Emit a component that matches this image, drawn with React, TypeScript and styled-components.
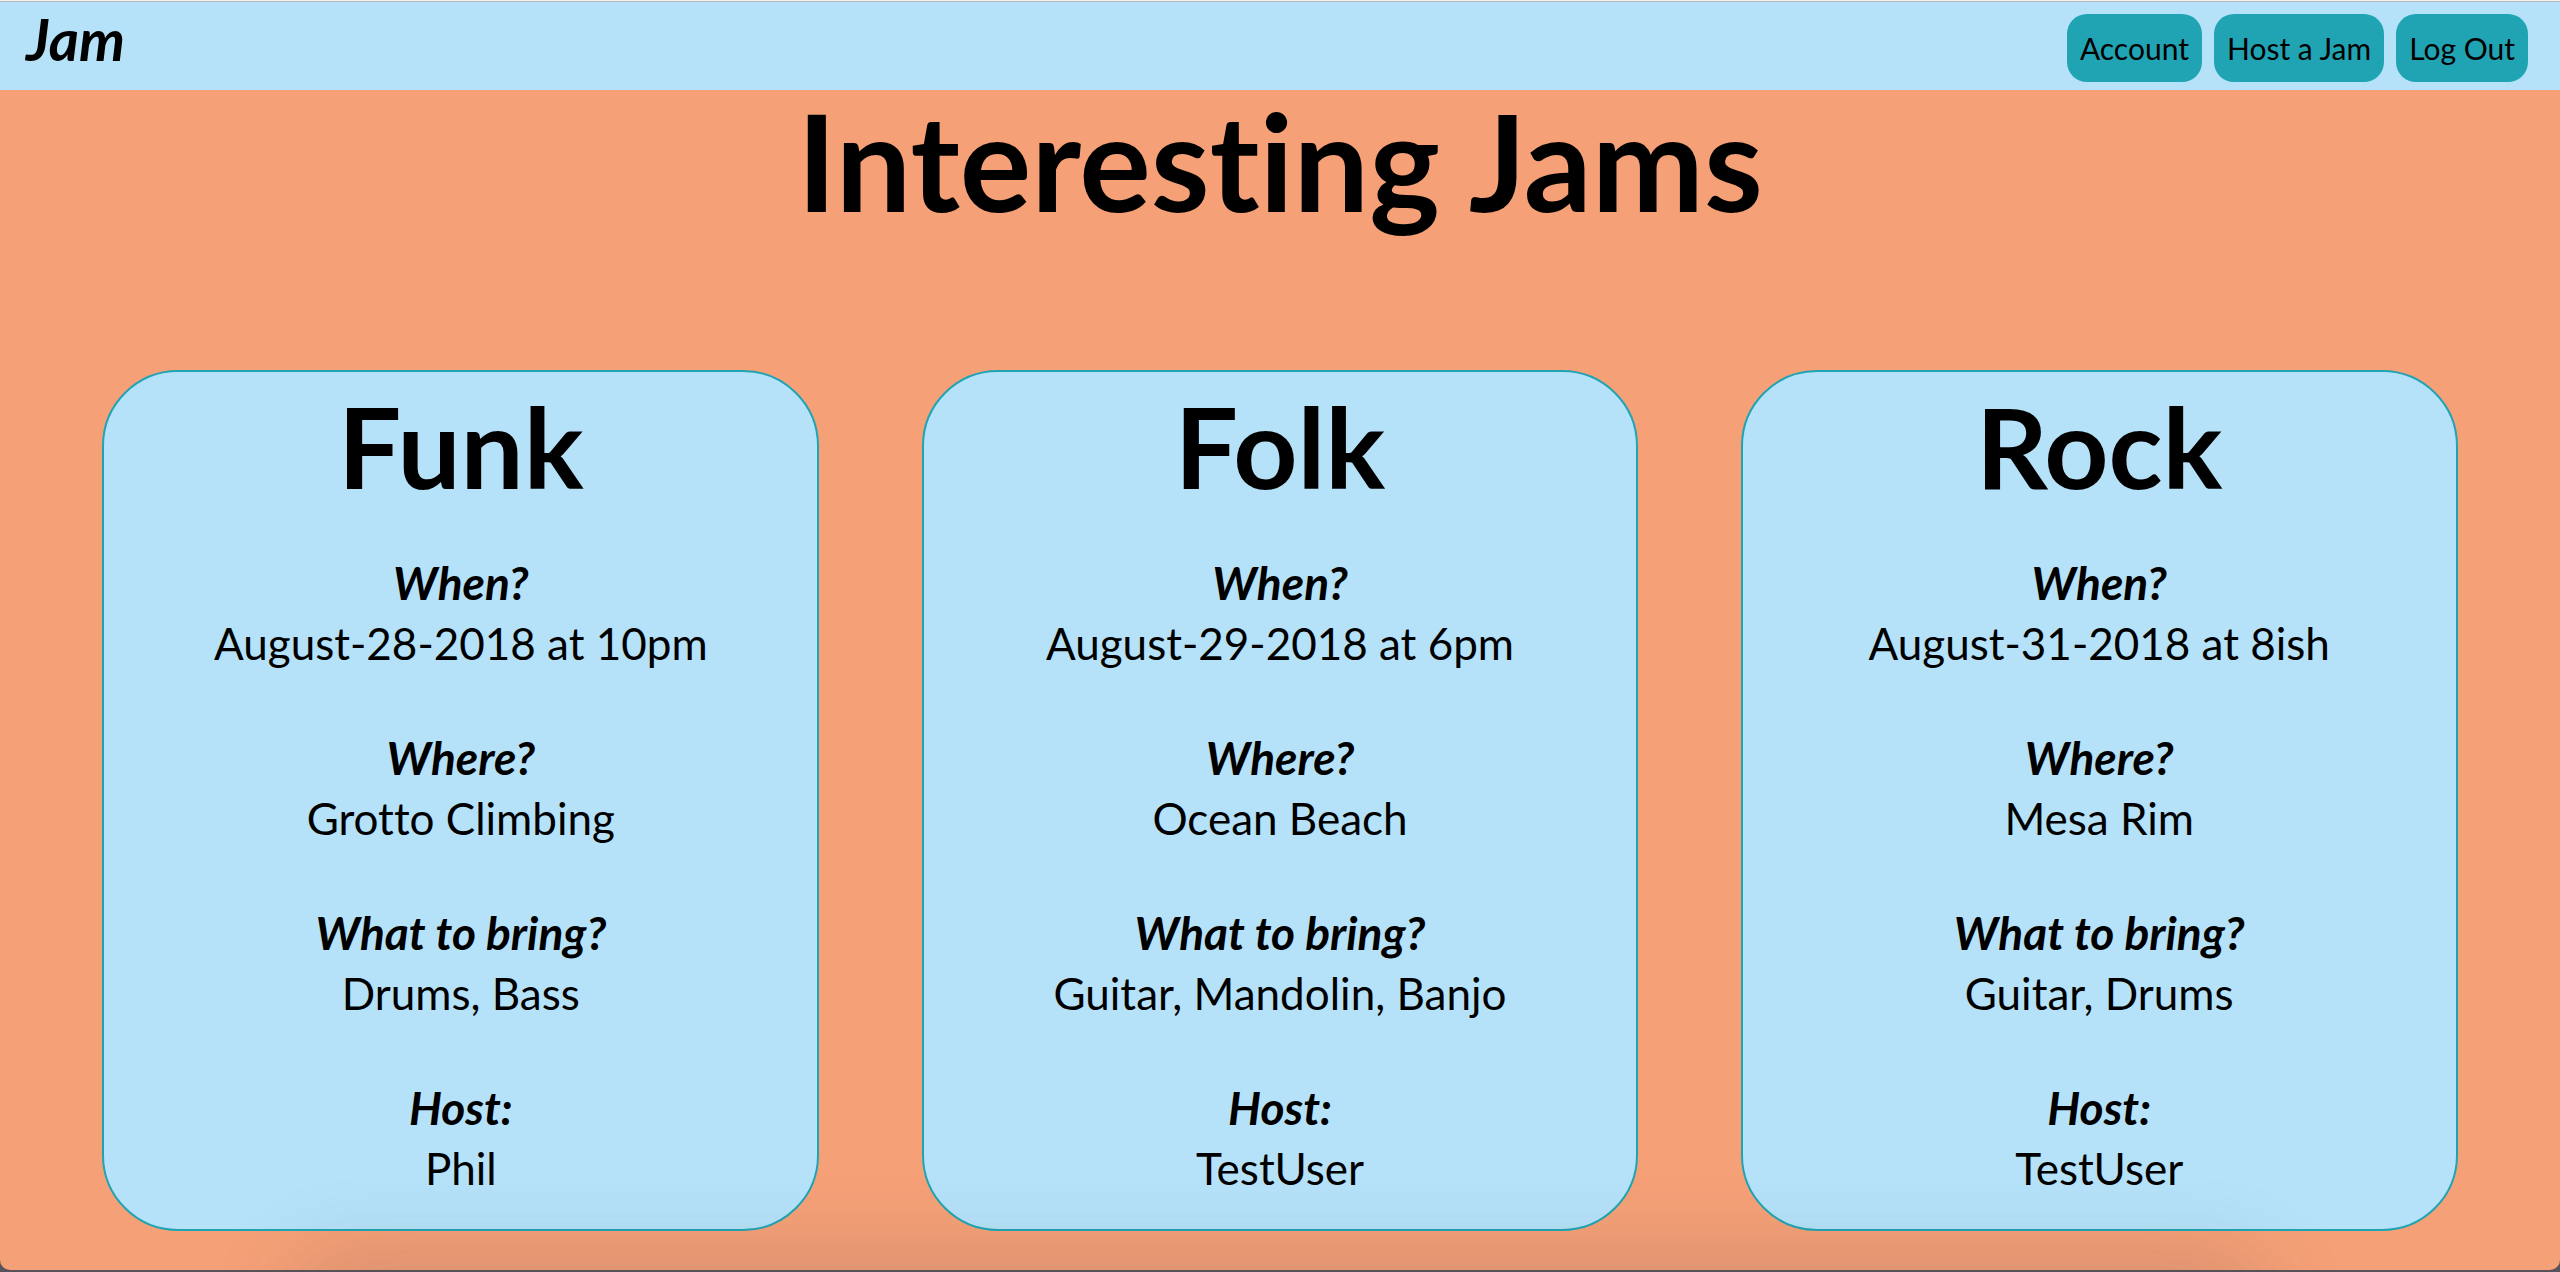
import React from "react";
import styled, { createGlobalStyle } from "styled-components";

const colors = {
  sky: "#b5e2f9",
  coral: "#f5a077",
  teal: "#20a4b3",
};

const GlobalStyle = createGlobalStyle`
  * { box-sizing: border-box; }
  body {
    margin: 0;
    background: ${colors.coral};
    color: #000;
    font-family: Lato, "Open Sans", sans-serif;
    font-variant-ligatures: none;
  }
`;

const Page = styled.div`
  min-height: 100vh;
  padding-bottom: 40px;
  border-top: 1px solid #f3f3f3;
`;

const Header = styled.header`
  display: flex;
  align-items: flex-start;
  justify-content: space-between;
  height: 89px;
  padding: 0 32px 0 26px;
  border-top: 1px solid #b4b4b8;
  background: ${colors.sky};
`;

const Logo = styled.a`
  color: inherit;
  font-size: 58px;
  font-style: italic;
  font-weight: 700;
  line-height: 74px;
  text-decoration: none;
`;

const Nav = styled.nav`
  display: flex;
  gap: 12px;
  padding-top: 12px;
`;

const NavButton = styled.button`
  height: 68px;
  padding: 0 13px;
  border: 0;
  border-radius: 20px;
  background: ${colors.teal};
  color: inherit;
  font-family: inherit;
  font-size: 30px;
  line-height: 68px;
  white-space: nowrap;
  cursor: pointer;
`;

const Title = styled.h1`
  margin: 0 0 138px;
  font-size: 134px;
  font-weight: 700;
  line-height: 142px;
  text-align: center;
`;

const Cards = styled.main`
  display: grid;
  grid-template-columns: repeat(3, 1fr);
  gap: 4vw;
  padding: 0 4vw;
`;

const Card = styled.article`
  padding-bottom: 30px;
  border: 2px solid ${colors.teal};
  border-radius: 76px;
  background: ${colors.sky};
  text-align: center;
`;

const Genre = styled.h2`
  margin: 0 0 32px;
  font-size: 112px;
  font-weight: 700;
  line-height: 148px;
`;

const Details = styled.dl`
  display: grid;
  gap: 53px;
  margin: 0;
  font-size: 44px;
  line-height: 61px;
`;

const Label = styled.dt`
  font-size: 46px;
  font-style: italic;
  font-weight: 700;
`;

const Value = styled.dd`
  margin: 0;
`;

const WindowEdge = styled.div`
  position: fixed;
  inset: 0;
  overflow: hidden;
  pointer-events: none;

  &::before {
    content: "";
    position: absolute;
    inset: -20px 0 2px;
    border-radius: 10px;
    box-shadow: 0 0 0 20px #59525a;
  }

  &::after {
    content: "";
    position: absolute;
    top: 100%;
    left: 12%;
    right: 12%;
    height: 80px;
    box-shadow: 0 0 90px rgba(70, 70, 70, 0.26);
  }
`;

const jams = [
  { genre: "Funk", when: "August-28-2018 at 10pm", where: "Grotto Climbing", bring: "Drums, Bass", host: "Phil" },
  { genre: "Folk", when: "August-29-2018 at 6pm", where: "Ocean Beach", bring: "Guitar, Mandolin, Banjo", host: "TestUser" },
  { genre: "Rock", when: "August-31-2018 at 8ish", where: "Mesa Rim", bring: "Guitar, Drums", host: "TestUser" },
];

function Detail({ label, value }: { label: string; value: string }) {
  return (
    <div>
      <Label>{label}</Label>
      <Value>{value}</Value>
    </div>
  );
}

export default function App() {
  return (
    <>
      <GlobalStyle />
      <Page>
        <Header>
          <Logo href="#">Jam</Logo>
          <Nav>
            <NavButton type="button">Account</NavButton>
            <NavButton type="button">Host a Jam</NavButton>
            <NavButton type="button">Log Out</NavButton>
          </Nav>
        </Header>
        <Title>Interesting Jams</Title>
        <Cards>
          {jams.map((jam) => (
            <Card key={jam.genre}>
              <Genre>{jam.genre}</Genre>
              <Details>
                <Detail label="When?" value={jam.when} />
                <Detail label="Where?" value={jam.where} />
                <Detail label="What to bring?" value={jam.bring} />
                <Detail label="Host:" value={jam.host} />
              </Details>
            </Card>
          ))}
        </Cards>
      </Page>
      <WindowEdge aria-hidden="true" />
    </>
  );
}
